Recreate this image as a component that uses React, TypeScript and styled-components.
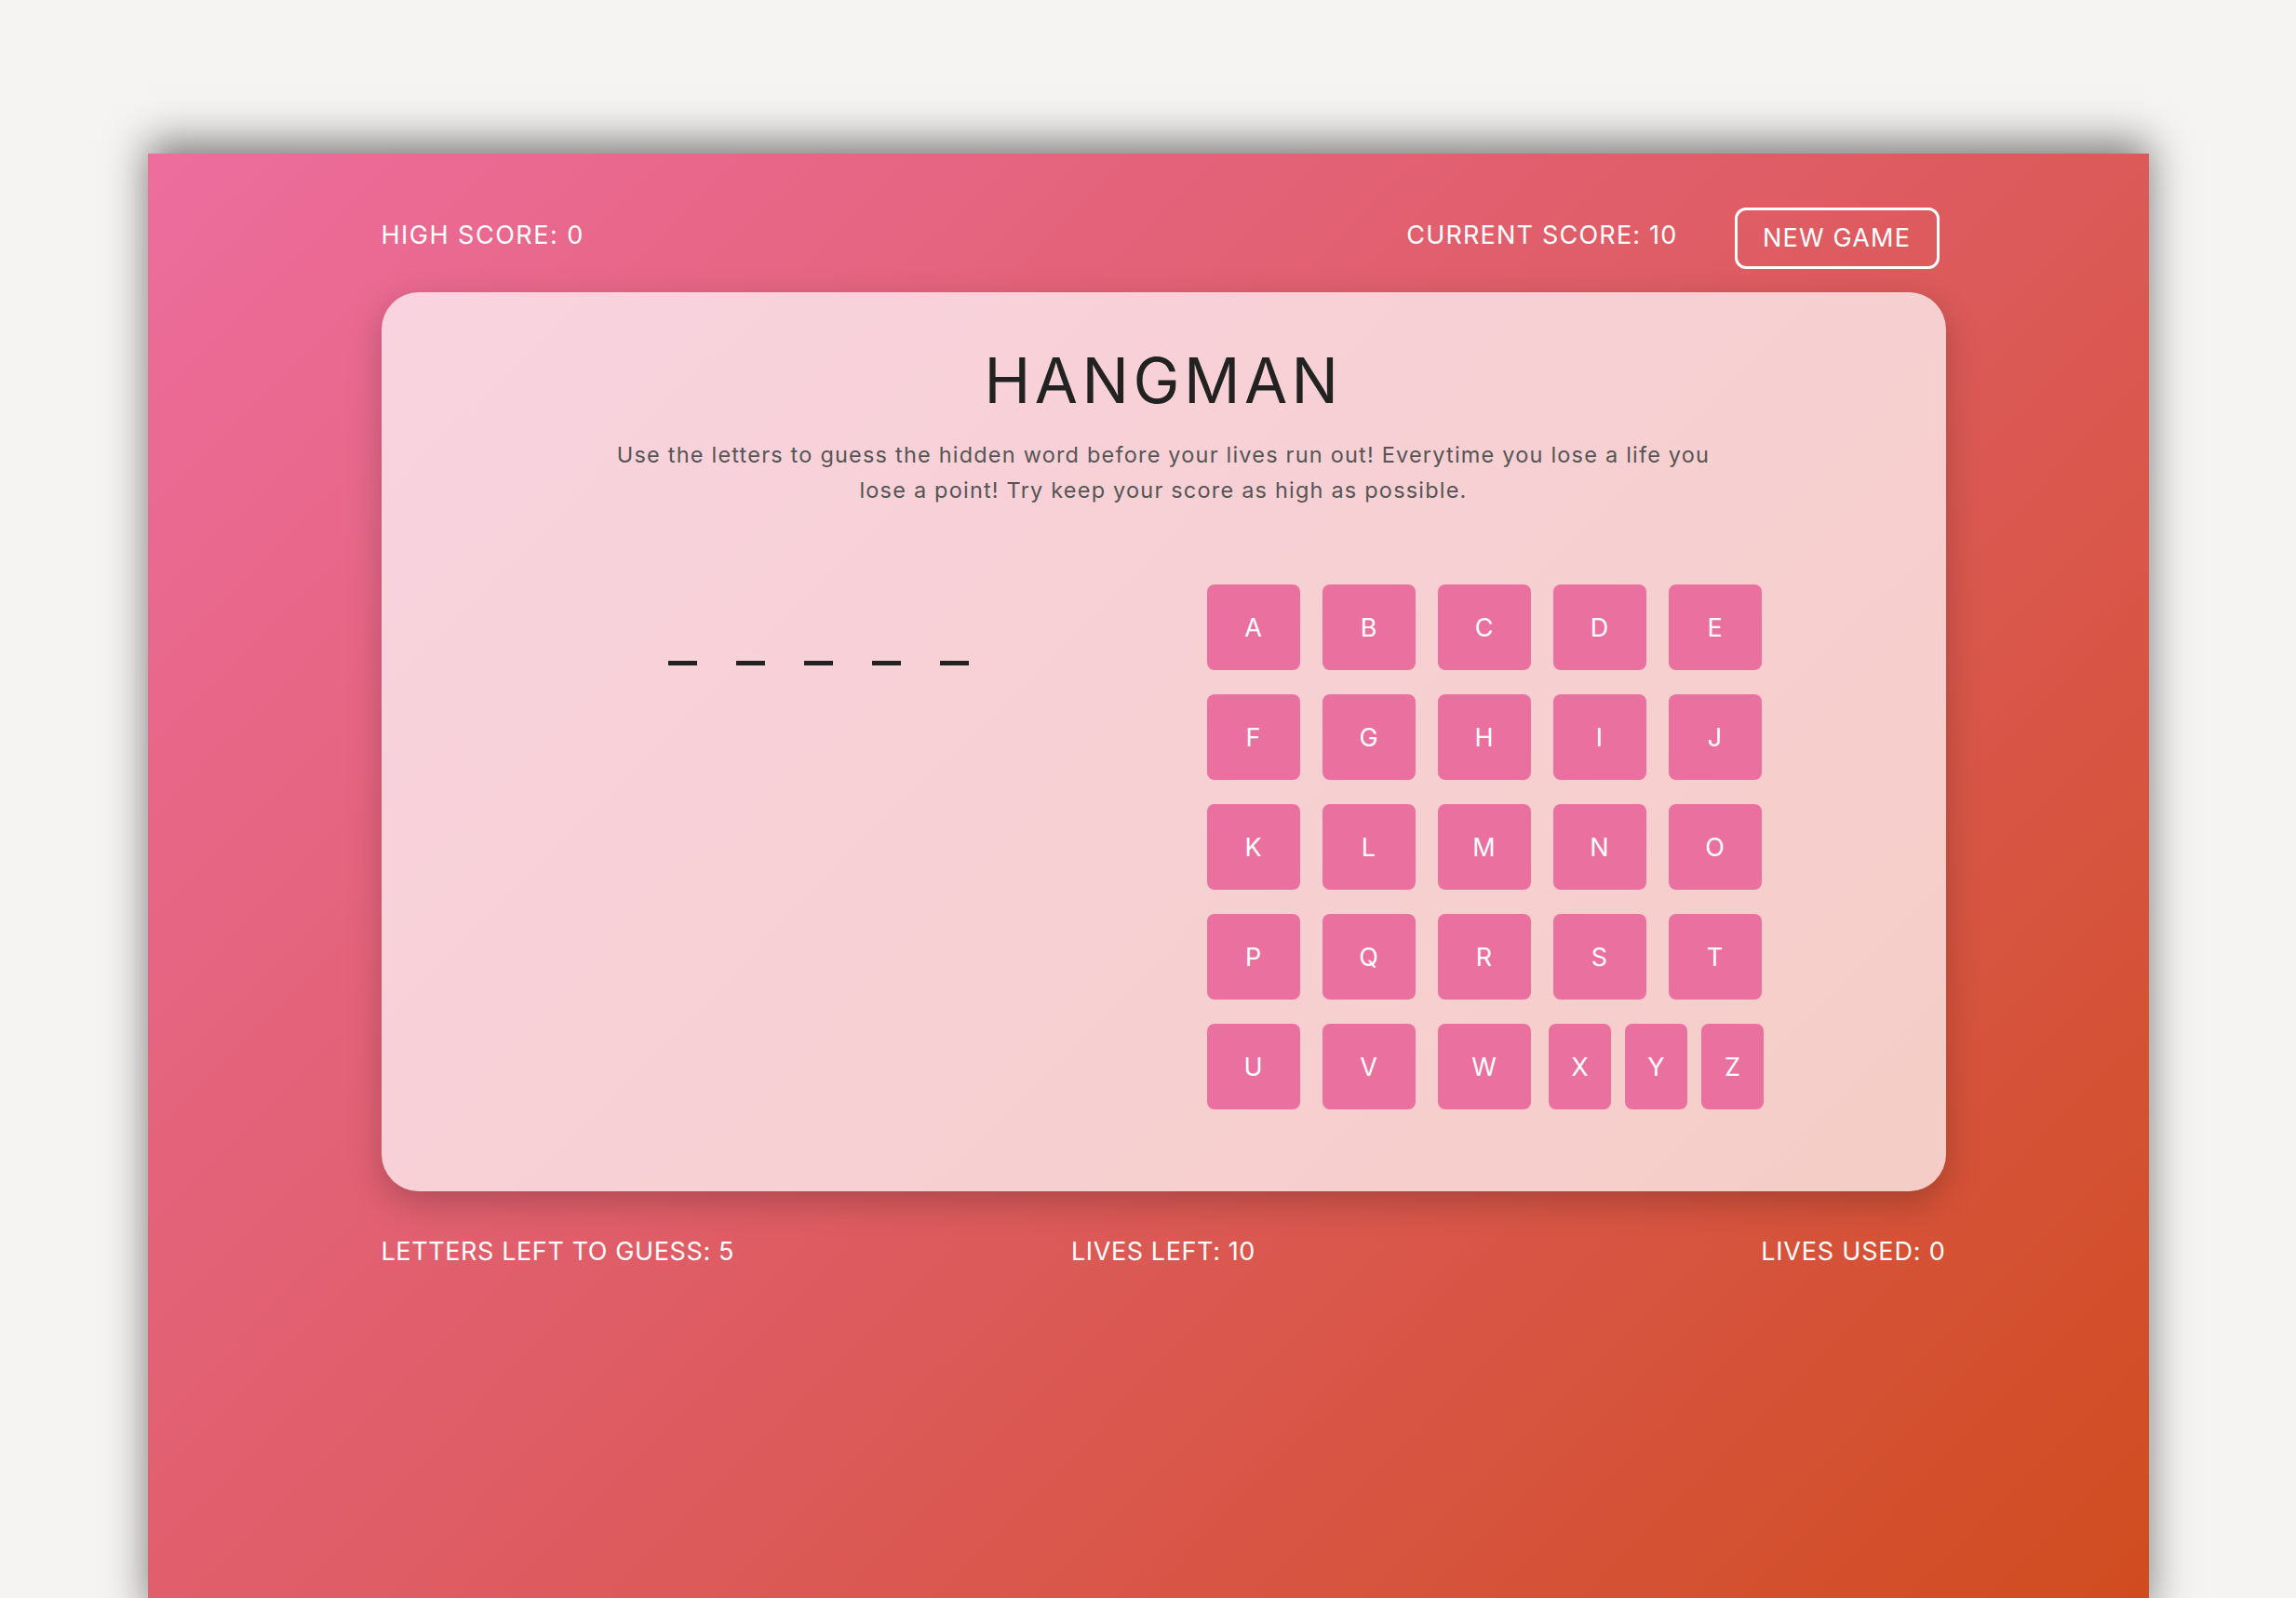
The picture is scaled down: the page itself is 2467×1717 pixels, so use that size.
import React from "react";
import styled, { createGlobalStyle } from "styled-components";

const GlobalStyle = createGlobalStyle`
  html, body {
    margin: 0;
    padding: 0;
    overflow: hidden;
    background: #f5f4f2;
    font-family: "Inter", "Open Sans", sans-serif;
  }
`;

const Page = styled.div`
  padding-top: 165px;
`;

const Panel = styled.main`
  width: 2150px;
  height: 1580px;
  margin: 0 auto;
  box-sizing: border-box;
  padding: 58px 218px 0 251px;
  background: linear-gradient(135deg, #ed6d9e 0%, #de5c62 50%, #d04c1e 100%);
  box-shadow: 0 -12px 42px rgba(0, 0, 0, 0.5);
`;

const Header = styled.header`
  display: flex;
  align-items: center;
  justify-content: space-between;
  height: 65px;
`;

const Stat = styled.span<{ $spacing?: number }>`
  color: #fff;
  font-size: 27px;
  letter-spacing: ${(p) => p.$spacing ?? 1}px;
  text-transform: uppercase;
  margin-bottom: 6px;
`;

const HeaderRight = styled.div`
  display: flex;
  align-items: center;
  gap: 61px;
  margin-right: 7px;
`;

const NewGameButton = styled.button`
  width: 220px;
  height: 66px;
  border: 3px solid #fff;
  border-radius: 12px;
  background: transparent;
  color: #fff;
  font-family: inherit;
  font-size: 27px;
  letter-spacing: 1.2px;
  cursor: pointer;
`;

const Card = styled.section`
  margin-top: 26px;
  padding: 55px 0 88px;
  border-radius: 40px;
  background: linear-gradient(135deg, #f9d3df 0%, #f7d0d4 50%, #f5cdc6 100%);
  box-shadow: 0 12px 36px rgba(0, 0, 0, 0.22);
  text-align: center;
`;

const Title = styled.h1`
  margin: 0;
  font-size: 67px;
  line-height: 80px;
  font-weight: 400;
  letter-spacing: 4.5px;
  color: #222;
`;

const Intro = styled.p`
  margin: 21px auto 0;
  max-width: 1200px;
  font-size: 23.5px;
  line-height: 38px;
  letter-spacing: 1.2px;
  color: #555;
`;

const PlayArea = styled.div`
  display: flex;
  justify-content: space-between;
  align-items: flex-start;
  margin-top: 82px;
  padding: 0 186px 0 287px;
`;

const Word = styled.div`
  display: flex;
  align-items: flex-end;
  margin-top: 26px;
`;

const Slot = styled.span`
  width: 31px;
  height: 56px;
  margin: 0 21px;
  border-bottom: 5px solid #222;
  font-size: 44px;
  color: #222;
`;

const Keyboard = styled.div`
  display: flex;
  flex-direction: column;
  gap: 26px;
`;

const KeyRow = styled.div`
  display: flex;
`;

const Key = styled.button<{ $narrow?: boolean }>`
  width: ${(p) => (p.$narrow ? "67px" : "100px")};
  height: 92px;
  margin: 0 ${(p) => (p.$narrow ? "7.5px" : "12px")};
  border: none;
  border-radius: 8px;
  background: #e9709f;
  color: #fff;
  font-family: inherit;
  font-size: 27px;
  cursor: pointer;
`;

const Footer = styled.footer`
  display: grid;
  grid-template-columns: 1fr 1fr 1fr;
  margin-top: 48px;

  & > :nth-child(2) {
    justify-self: center;
  }
  & > :nth-child(3) {
    justify-self: end;
  }
`;

const rows = [
  ["A", "B", "C", "D", "E"],
  ["F", "G", "H", "I", "J"],
  ["K", "L", "M", "N", "O"],
  ["P", "Q", "R", "S", "T"],
  ["U", "V", "W", "X", "Y", "Z"],
];

const word = ["", "", "", "", ""];

export default function App() {
  return (
    <>
      <GlobalStyle />
      <Page>
        <Panel>
          <Header>
            <Stat $spacing={1.5}>High score: 0</Stat>
            <HeaderRight>
              <Stat $spacing={1.2}>Current score: 10</Stat>
              <NewGameButton>NEW GAME</NewGameButton>
            </HeaderRight>
          </Header>

          <Card>
            <Title>HANGMAN</Title>
            <Intro>
              Use the letters to guess the hidden word before your lives run
              out! Everytime you lose a life you lose a point! Try keep your
              score as high as possible.
            </Intro>

            <PlayArea>
              <Word>
                {word.map((letter, i) => (
                  <Slot key={i}>{letter}</Slot>
                ))}
              </Word>
              <Keyboard>
                {rows.map((row, r) => (
                  <KeyRow key={r}>
                    {row.map((letter) => (
                      <Key key={letter} $narrow={row.length > 5 && "XYZ".includes(letter)}>
                        {letter}
                      </Key>
                    ))}
                  </KeyRow>
                ))}
              </Keyboard>
            </PlayArea>
          </Card>

          <Footer>
            <Stat $spacing={0.6}>Letters left to guess: 5</Stat>
            <Stat $spacing={0.6}>Lives left: 10</Stat>
            <Stat $spacing={0.8}>Lives used: 0</Stat>
          </Footer>
        </Panel>
      </Page>
    </>
  );
}
